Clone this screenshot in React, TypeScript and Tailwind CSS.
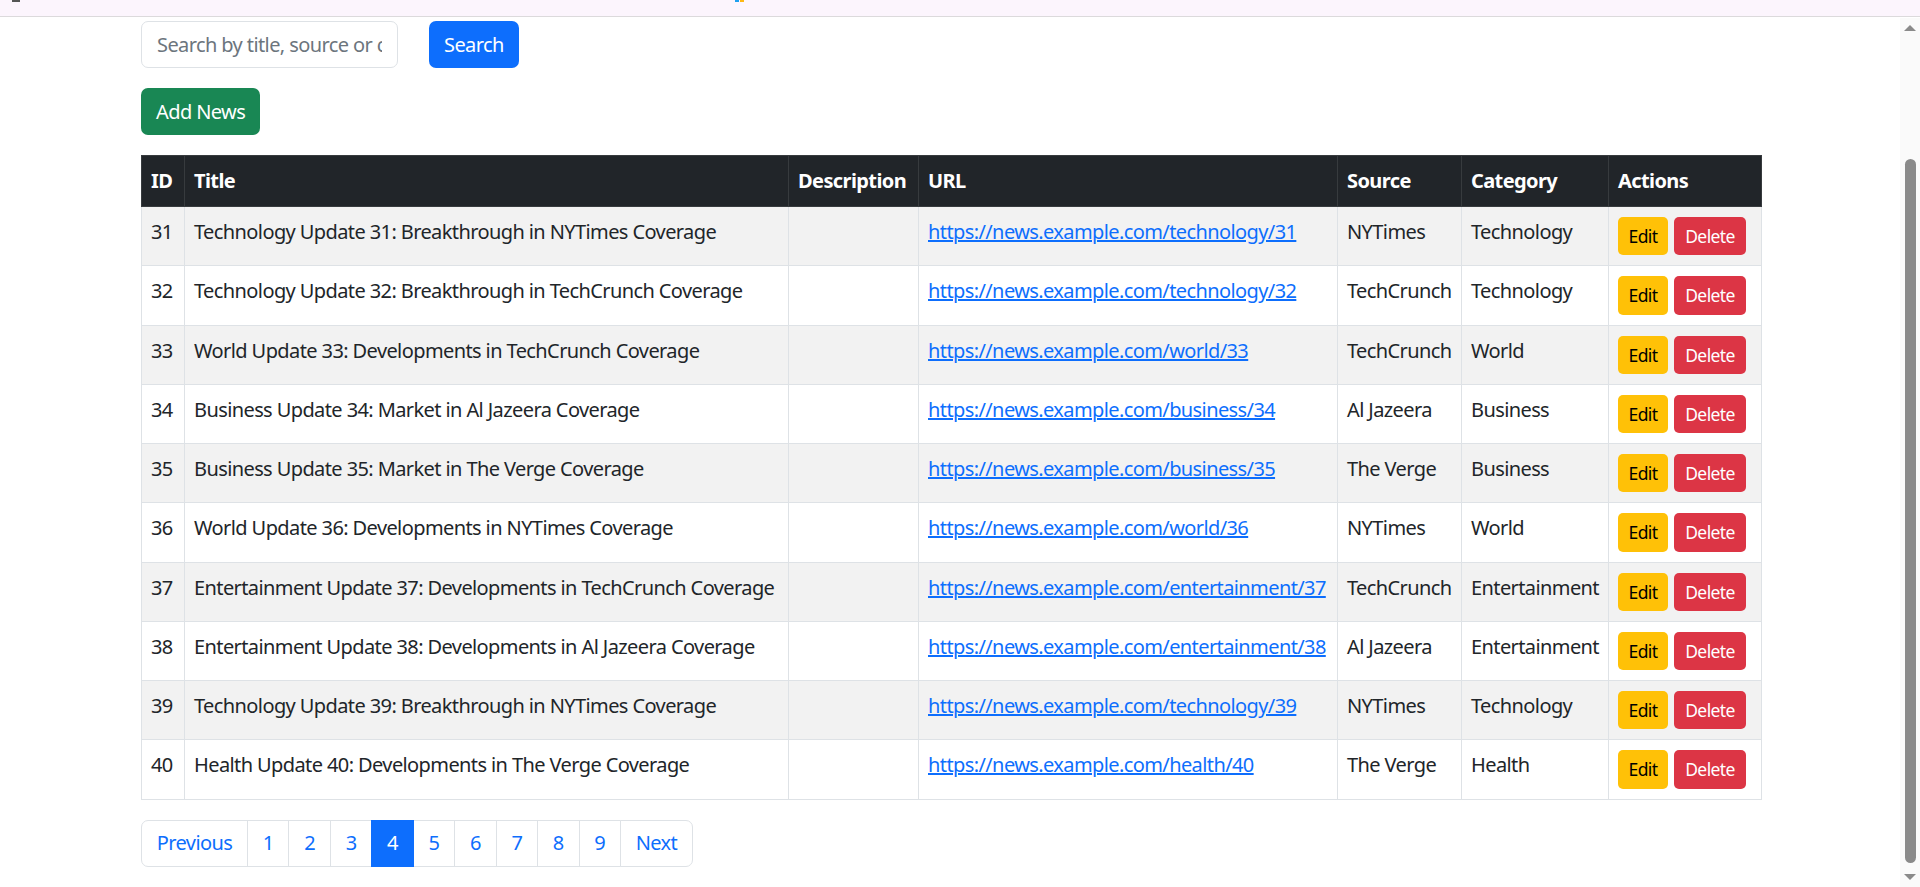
import React from "react";

type News = {
  id: number;
  title: string;
  url: string;
  source: string;
  category: string;
};

const rows: News[] = [
  { id: 31, title: "Technology Update 31: Breakthrough in NYTimes Coverage", url: "https://news.example.com/technology/31", source: "NYTimes", category: "Technology" },
  { id: 32, title: "Technology Update 32: Breakthrough in TechCrunch Coverage", url: "https://news.example.com/technology/32", source: "TechCrunch", category: "Technology" },
  { id: 33, title: "World Update 33: Developments in TechCrunch Coverage", url: "https://news.example.com/world/33", source: "TechCrunch", category: "World" },
  { id: 34, title: "Business Update 34: Market in Al Jazeera Coverage", url: "https://news.example.com/business/34", source: "Al Jazeera", category: "Business" },
  { id: 35, title: "Business Update 35: Market in The Verge Coverage", url: "https://news.example.com/business/35", source: "The Verge", category: "Business" },
  { id: 36, title: "World Update 36: Developments in NYTimes Coverage", url: "https://news.example.com/world/36", source: "NYTimes", category: "World" },
  { id: 37, title: "Entertainment Update 37: Developments in TechCrunch Coverage", url: "https://news.example.com/entertainment/37", source: "TechCrunch", category: "Entertainment" },
  { id: 38, title: "Entertainment Update 38: Developments in Al Jazeera Coverage", url: "https://news.example.com/entertainment/38", source: "Al Jazeera", category: "Entertainment" },
  { id: 39, title: "Technology Update 39: Breakthrough in NYTimes Coverage", url: "https://news.example.com/technology/39", source: "NYTimes", category: "Technology" },
  { id: 40, title: "Health Update 40: Developments in The Verge Coverage", url: "https://news.example.com/health/40", source: "The Verge", category: "Health" },
];

const pages = ["Previous", "1", "2", "3", "4", "5", "6", "7", "8", "9", "Next"];

const cell = "border border-[#dee2e6] px-[9px] py-[10px] align-top whitespace-nowrap";

export default function App() {
  return (
    <div className="min-h-screen bg-white text-[20px] leading-[1.5] tracking-[-0.6px] text-[#212529] font-['Noto_Sans',sans-serif]">
      {/* browser chrome strip left in the capture */}
      <div className="relative h-[17px] border-b border-[#dcdadc] bg-[#fcf5fd]">
        <div className="absolute left-[12px] top-0 h-[2px] w-[8px] bg-[#555]" />
        <div className="absolute left-[735px] top-0 flex gap-[1px]">
          <div className="h-[2px] w-[4px] bg-[#1ea0ef]" />
          <div className="h-[2px] w-[4px] bg-[#fdb813]" />
        </div>
      </div>

      {/* fake scrollbar */}
      <div className="fixed right-0 top-[18px] bottom-0 w-[20px] bg-[#fafafa]">
        <div className="mx-auto mt-[7px] h-0 w-0 border-x-[6px] border-b-[6px] border-x-transparent border-b-[#8a8a8a]" />
        <div className="absolute left-[5px] top-[141px] h-[704px] w-[11px] rounded-full bg-[#8a8a8a]" />
        <div className="absolute bottom-[7px] left-[4px] h-0 w-0 border-x-[6px] border-t-[6px] border-x-transparent border-t-[#8a8a8a]" />
      </div>

      <div className="ml-[141px] w-[1620px] pt-[4px]">
        <div className="mb-[20px] flex items-center gap-[31px]">
          <input
            className="h-[47px] w-[257px] rounded-[7px] border border-[#dee2e6] px-[15px] text-[20px] text-[#212529] outline-none placeholder:text-[#6c757d]"
            placeholder="Search by title, source or category"
          />
          <button className="h-[47px] rounded-[7px] bg-[#0d6efd] px-[15px] text-white">Search</button>
        </div>

        <button className="mb-[20px] h-[47px] rounded-[7px] bg-[#198754] px-[15px] text-white">Add News</button>

        <table className="w-[1620px] table-fixed border-collapse">
          <colgroup>
            <col className="w-[43px]" />
            <col className="w-[604px]" />
            <col className="w-[130px]" />
            <col className="w-[419px]" />
            <col className="w-[124px]" />
            <col className="w-[147px]" />
            <col className="w-[153px]" />
          </colgroup>
          <thead>
            <tr className="bg-[#212529] text-left text-white">
              {["ID", "Title", "Description", "URL", "Source", "Category", "Actions"].map((h) => (
                <th key={h} className="border border-[#373b3e] px-[9px] py-[10px] align-top font-bold">{h}</th>
              ))}
            </tr>
          </thead>
          <tbody>
            {rows.map((r, i) => (
              <tr key={r.id} className={i % 2 === 0 ? "bg-[#f2f2f2]" : "bg-white"}>
                <td className={cell}>{r.id}</td>
                <td className={cell}>{r.title}</td>
                <td className={cell}></td>
                <td className={cell}>
                  <a href="#" className="text-[#0d6efd] underline">{r.url}</a>
                </td>
                <td className={cell}>{r.source}</td>
                <td className={cell}>{r.category}</td>
                <td className={cell}>
                  <div className="flex gap-[6px]">
                    <button className="h-[38.25px] w-[50px] rounded-[5px] bg-[#ffc107] text-[17.5px] text-black">Edit</button>
                    <button className="h-[38.25px] w-[72px] rounded-[5px] bg-[#dc3545] text-[17.5px] text-white">Delete</button>
                  </div>
                </td>
              </tr>
            ))}
          </tbody>
        </table>

        <nav className="mt-[20px] flex">
          {pages.map((p) => (
            <a
              key={p}
              href="#"
              className={
                "-ml-px flex h-[47px] items-center border px-[14.8px] first:ml-0 first:rounded-l-[7px] last:rounded-r-[7px] " +
                (p === "4"
                  ? "relative z-10 border-[#0d6efd] bg-[#0d6efd] text-white"
                  : "border-[#dee2e6] bg-white text-[#0d6efd]")
              }
            >
              {p}
            </a>
          ))}
        </nav>
      </div>
    </div>
  );
}
